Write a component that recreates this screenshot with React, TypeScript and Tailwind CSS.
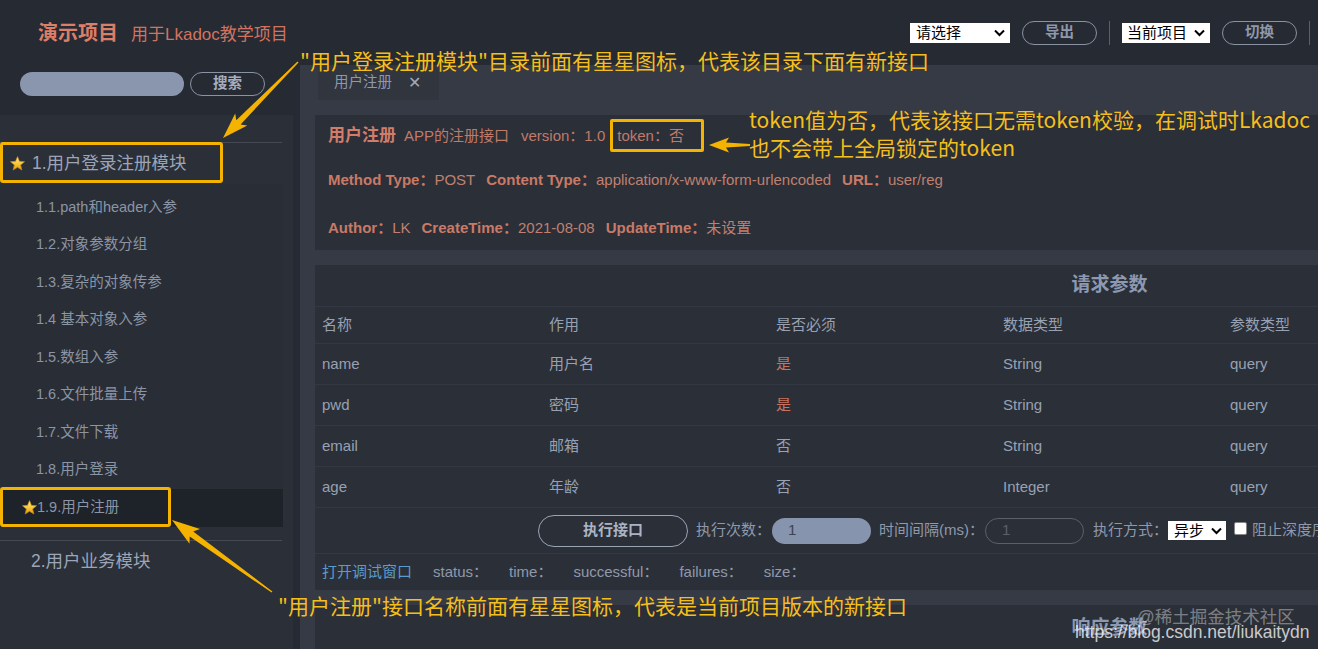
import React from "react";

function starPoints(cx: number, cy: number, ro: number, ri: number) {
  const pts: string[] = [];
  for (let i = 0; i < 10; i++) {
    const a = (-90 + i * 36) * (Math.PI / 180);
    const r = i % 2 === 0 ? ro : ri;
    pts.push(`${(cx + r * Math.cos(a)).toFixed(2)},${(cy + r * Math.sin(a)).toFixed(2)}`);
  }
  return pts.join(" ");
}

function Star() {
  return (
    <svg width="15" height="15" viewBox="0 0 15 15" className="shrink-0">
      <defs>
        <linearGradient id="sg" x1="0" y1="0" x2="0" y2="1">
          <stop offset="0" stopColor="#fff1a8" />
          <stop offset="0.5" stopColor="#f8c93a" />
          <stop offset="1" stopColor="#e89a12" />
        </linearGradient>
      </defs>
      <polygon points={starPoints(7.5, 8, 7.4, 3.3)} fill="url(#sg)" stroke="#c9850e" strokeWidth="0.7" strokeLinejoin="round" />
    </svg>
  );
}

function Chevron() {
  return (
    <svg width="11" height="8" viewBox="0 0 11 8">
      <path d="M1 1.5 L5.5 6 L10 1.5" fill="none" stroke="#000" strokeWidth="2" />
    </svg>
  );
}

function arrowPoints(x1: number, y1: number, x2: number, y2: number, L: number, W: number, w0: number, w1: number, sweep: number) {
  const dx = x2 - x1, dy = y2 - y1;
  const len = Math.hypot(dx, dy);
  const ux = dx / len, uy = dy / len;
  const nx = -uy, ny = ux;
  const bx = x2 - ux * L, by = y2 - uy * L;
  const sx = bx - ux * sweep, sy = by - uy * sweep;
  const p = [
    [x1 + (nx * w0) / 2, y1 + (ny * w0) / 2],
    [bx + (nx * w1) / 2, by + (ny * w1) / 2],
    [sx + (nx * W) / 2, sy + (ny * W) / 2],
    [x2, y2],
    [sx - (nx * W) / 2, sy - (ny * W) / 2],
    [bx - (nx * w1) / 2, by - (ny * w1) / 2],
    [x1 - (nx * w0) / 2, y1 - (ny * w0) / 2],
  ];
  return p.map((q) => `${q[0].toFixed(1)},${q[1].toFixed(1)}`).join(" ");
}

const subItems = [
  "1.1.path和header入参",
  "1.2.对象参数分组",
  "1.3.复杂的对象传参",
  "1.4 基本对象入参",
  "1.5.数组入参",
  "1.6.文件批量上传",
  "1.7.文件下载",
  "1.8.用户登录",
];

const rows = [
  { n: "name", d: "用户名", r: "是", t: "String", p: "query" },
  { n: "pwd", d: "密码", r: "是", t: "String", p: "query" },
  { n: "email", d: "邮箱", r: "否", t: "String", p: "query" },
  { n: "age", d: "年龄", r: "否", t: "Integer", p: "query" },
];

function Pair({ k, v }: { k: string; v: string }) {
  return (
    <span className="mr-[11px] whitespace-nowrap">
      <span className="font-bold text-[#c97a66]">{k}：</span>
      <span className="text-[#c0806f]">{v}</span>
    </span>
  );
}

export default function App() {
  return (
    <div className="relative h-[649px] w-[1318px] overflow-hidden bg-[#262a33] font-['Liberation_Sans','Noto_Sans_CJK_SC',sans-serif] text-[15px] text-[#95a0b2]">
      {/* header */}
      <header className="flex h-[65px] items-center">
        <div className="flex items-baseline pl-[38px]">
          <span className="text-[20px] font-bold text-[#dc7e68]">演示项目</span>
          <span className="ml-[13px] text-[17px] text-[#d3735f]">用于Lkadoc教学项目</span>
        </div>
        <div className="ml-auto mr-[8px] flex items-center gap-[12px]">
          <div className="flex h-[20px] w-[100px] items-center justify-between bg-white pl-[6px] pr-[5px] text-[15px] leading-none text-black">
            <span>请选择</span>
            <Chevron />
          </div>
          <button className="h-[24px] w-[75px] rounded-full border border-[#8a93a3] text-[14.5px] font-bold text-[#8e98aa]">导出</button>
          <div className="h-[24px] w-px bg-[#5a5f68]" />
          <div className="flex h-[20px] w-[88px] items-center justify-between bg-white pl-[5px] pr-[5px] text-[15px] leading-none text-black">
            <span>当前项目</span>
            <Chevron />
          </div>
          <button className="h-[24px] w-[75px] rounded-full border border-[#8a93a3] text-[14.5px] font-bold text-[#8e98aa]">切换</button>
          <div className="h-[24px] w-px bg-[#5a5f68]" />
        </div>
      </header>

      <div className="flex h-[584px]">
        {/* sidebar */}
        <aside className="flex w-[300px] shrink-0 flex-col">
          <div className="flex h-[50px] shrink-0 items-start gap-[6px] pl-[20px] pt-[7px]">
            <div className="h-[24px] w-[164px] rounded-full bg-[#8a96ae]" />
            <button className="h-[24px] w-[75px] rounded-full border border-[#8a93a3] text-[14.5px] font-bold text-[#a5aebe]">搜索</button>
          </div>
          <div className="w-[293px] flex-1 bg-[#2b2f38] pt-[27px]">
            <div className="mr-[11px] flex h-[42px] items-center gap-[7px] border-t border-[#444953] pl-[10px] text-[17.5px] text-[#9ba5b7]">
              <Star />
              <span>1.用户登录注册模块</span>
            </div>
            <div className="w-[283px] bg-[#292d35] pt-[5px]">
              {subItems.map((s) => (
                <div key={s} className="flex h-[37.5px] items-center pl-[36px] text-[14.5px] text-[#8b95a6]">
                  {s}
                </div>
              ))}
              <div className="flex h-[37.5px] items-center bg-[#1e2229] pl-[22px] text-[14.5px] text-[#8b95a6]">
                <Star />
                <span>1.9.用户注册</span>
              </div>
            </div>
            <div className="mr-[11px] mt-[13px] flex h-[42px] items-center border-t border-[#444953] pl-[31px] text-[17.5px] text-[#9ba5b7]">
              2.用户业务模块
            </div>
          </div>
        </aside>

        {/* main */}
        <main className="flex min-w-0 flex-1 flex-col overflow-hidden bg-[#363a44]">
          <div className="flex h-[35px] shrink-0 items-center">
            <div className="ml-[18px] flex h-full items-center bg-[#31353e] pl-[16px] pr-[18px]">
              <span className="text-[14.5px] text-[#8e98aa]">用户注册</span>
              <span className="ml-[16px] text-[16px] text-[#a3acbb]">✕</span>
            </div>
          </div>

          <div className="flex shrink-0 flex-col gap-[15px] pl-[15px] pt-[15px]">
            {/* info card */}
            <section className="flex h-[135px] w-[1589px] shrink-0 flex-col bg-[#2b2f38] pl-[13px]">
              <div className="flex h-[42px] shrink-0 items-center whitespace-nowrap">
                <span className="mr-[8px] text-[17px] font-bold text-[#d27d69]">用户注册</span>
                <span className="mr-[12px] text-[#c07a6a]">APP的注册接口</span>
                <span className="mr-[12px] text-[#c07a6a]">version：1.0</span>
                <span className="text-[#c07a6a]">token：否</span>
              </div>
              <div className="flex h-[46px] shrink-0 items-center">
                <Pair k="Method Type" v="POST" />
                <Pair k="Content Type" v="application/x-www-form-urlencoded" />
                <Pair k="URL" v="user/reg" />
              </div>
              <div className="flex h-[47px] shrink-0 items-center pt-[4px]">
                <Pair k="Author" v="LK" />
                <Pair k="CreateTime" v="2021-08-08" />
                <Pair k="UpdateTime" v="未设置" />
              </div>
            </section>

            {/* request params card */}
            <section className="flex w-[1589px] shrink-0 flex-col bg-[#2b2f38]">
              <div className="flex h-[42px] shrink-0 items-center justify-center border-b border-[#333843] text-[19px] font-bold text-[#8d99b1]">请求参数</div>
              <div className="grid h-[37px] shrink-0 grid-cols-7 items-center border-b border-[#333843] text-[#98a1b2]">
                <span className="pl-[7px]">名称</span>
                <span className="pl-[7px]">作用</span>
                <span className="pl-[7px]">是否必须</span>
                <span className="pl-[7px]">数据类型</span>
                <span className="pl-[7px]">参数类型</span>
                <span className="pl-[7px]">默认值</span>
                <span className="pl-[7px]">示例</span>
              </div>
              {rows.map((r) => (
                <div key={r.n} className="grid h-[41px] shrink-0 grid-cols-7 items-center border-b border-[#333843] text-[#98a1b2]">
                  <span className="pl-[7px]">{r.n}</span>
                  <span className="pl-[7px]">{r.d}</span>
                  <span className={r.r === "是" ? "pl-[7px] text-[#c8735f]" : "pl-[7px]"}>{r.r}</span>
                  <span className="pl-[7px]">{r.t}</span>
                  <span className="pl-[7px]">{r.p}</span>
                  <span className="pl-[7px]"></span>
                  <span className="pl-[7px]"></span>
                </div>
              ))}
              <div className="flex h-[46px] shrink-0 items-center whitespace-nowrap border-b border-[#333843] pl-[223px] text-[#8f99ab]">
                <button className="h-[32px] w-[150px] rounded-full border border-[#9aa3b3] font-bold text-[#aab4c4]">执行接口</button>
                <span className="ml-[8px]">执行次数：</span>
                <div className="ml-[1px] flex h-[26px] w-[99px] items-center rounded-full bg-[#8794ad] pl-[16px] text-[#3c4352]">1</div>
                <span className="ml-[8px]">时间间隔(ms)：</span>
                <div className="ml-[1px] flex h-[26px] w-[99px] items-center rounded-full border border-[#5b6068] pl-[16px] text-[#5b606a]">1</div>
                <span className="ml-[9px]">执行方式：</span>
                <div className="flex h-[19px] w-[58px] items-center justify-between bg-white pl-[6px] pr-[4px] text-[15px] leading-none text-black">
                  <span>异步</span>
                  <Chevron />
                </div>
                <div className="mb-[4px] ml-[8px] h-[13px] w-[13px] rounded-[2px] border border-[#888] bg-white" />
                <span className="ml-[5px]">阻止深度序列化</span>
              </div>
              <div className="flex h-[36px] shrink-0 items-center gap-[21px] pl-[7px] text-[#8f99ab]">
                <span className="text-[#5a9ccb]">打开调试窗口</span>
                <span>status：</span>
                <span>time：</span>
                <span>successful：</span>
                <span>failures：</span>
                <span>size：</span>
              </div>
            </section>

            {/* response card */}
            <section className="flex h-[60px] w-[1589px] shrink-0 flex-col bg-[#2b2f38]">
              <div className="flex h-[47px] shrink-0 items-center justify-center text-[19px] font-bold text-[#8d99b1]">响应参数</div>
            </section>
          </div>
        </main>
      </div>

      {/* watermark */}
      <div className="pointer-events-none absolute left-[1137px] top-[604px] whitespace-nowrap text-[17.5px] text-white/40">@稀土掘金技术社区</div>
      <div className="pointer-events-none absolute left-[1075px] top-[619px] whitespace-nowrap text-[17.5px] text-white/75">https://blog.csdn.net/liukaitydn</div>

      {/* annotations */}
      <div className="pointer-events-none absolute left-0 top-[142px] h-[41px] w-[223px] rounded-[3px] border-[3px] border-[#f5b301]" />
      <div className="pointer-events-none absolute left-[610px] top-[119px] h-[33px] w-[94px] rounded-[2px] border-[3px] border-[#f5b301]" />
      <div className="pointer-events-none absolute left-0 top-[487px] h-[40px] w-[171px] rounded-[3px] border-[3px] border-[#f5b301]" />

      <svg className="pointer-events-none absolute left-0 top-0" width="1318" height="649">
        <polygon points={arrowPoints(298, 62, 223, 138, 22, 17, 1.5, 6, 4)} fill="#f5b301" />
        <polygon points={arrowPoints(750, 145, 709, 145, 17, 15, 2, 5, 3)} fill="#f5b301" />
        <polygon points={arrowPoints(272, 592, 172, 520, 24, 18, 1.5, 6, 4)} fill="#f5b301" />
      </svg>

      <div className="pointer-events-none absolute left-[300px] top-[46px] whitespace-nowrap font-['Noto_Sans_CJK_SC',sans-serif] text-[21px] leading-[28px] text-[#f5bf1b]">
        "用户登录注册模块"目录前面有星星图标，代表该目录下面有新接口
      </div>
      <div className="pointer-events-none absolute left-[749px] top-[105px] whitespace-nowrap font-['Noto_Sans_CJK_SC',sans-serif] text-[21px] leading-[28px] text-[#f5bf1b]">
        <div>token值为否，代表该接口无需token校验，在调试时Lkadoc</div>
        <div>也不会带上全局锁定的token</div>
      </div>
      <div className="pointer-events-none absolute left-[278px] top-[591px] whitespace-nowrap font-['Noto_Sans_CJK_SC',sans-serif] text-[21px] leading-[28px] text-[#f5bf1b]">
        "用户注册"接口名称前面有星星图标，代表是当前项目版本的新接口
      </div>
    </div>
  );
}
